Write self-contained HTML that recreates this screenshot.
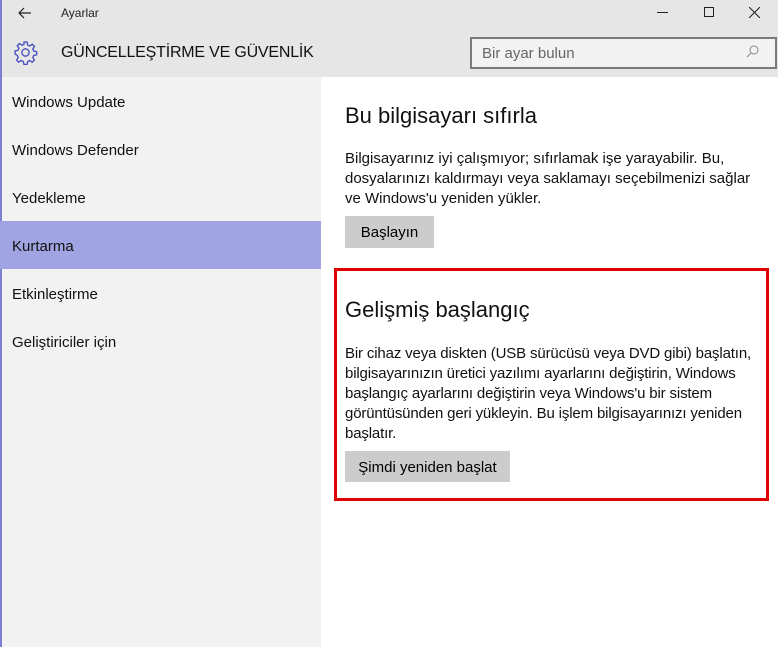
<!DOCTYPE html>
<html><head><meta charset="utf-8"><style>
*{margin:0;padding:0;box-sizing:border-box}
body{width:778px;height:647px;overflow:hidden;background:#fff;font-family:"Liberation Sans",sans-serif;color:#000;position:relative}
.hdr{position:absolute;left:0;top:0;width:778px;height:77px;background:#e6e6e6}
.side{position:absolute;left:0;top:77px;width:321px;height:570px;background:#f2f2f2}
.lb{position:absolute;left:0;top:0;width:2px;height:647px;background:#7b7fd0}
.t{position:absolute;white-space:nowrap}
.item{position:absolute;left:0;width:321px;height:48px;padding-left:12px;padding-top:2px;line-height:48px;font-size:15px;color:#111}
.sel{background:#a0a4e2}
.btn{position:absolute;background:#cccccc;font-size:15px;text-align:center;padding-top:1px}
p.b{position:absolute;left:345px;font-size:15px;line-height:20px;white-space:nowrap;color:#111}
</style></head><body>
<div class="hdr"></div>
<div class="side"></div>
<div class="lb"></div>
<svg class="t" style="left:17px;top:5px" width="16" height="16" viewBox="0 0 16 16"><path d="M14 8H2M7 3L2 8l5 5" fill="none" stroke="#222" stroke-width="1.2"/></svg>
<div class="t" style="left:61px;top:6px;font-size:12px;color:#222">Ayarlar</div>
<svg class="t" style="left:13px;top:40px" width="25" height="25" viewBox="0 0 24 24"><g fill="none" stroke="#4a4fc0" stroke-width="1.3"><circle cx="12" cy="12" r="3.5"/><path d="M10.5 2h3l.6 2.8 2 .9 2.4-1.6 2.1 2.1-1.6 2.4.9 2 2.8.6v3l-2.8.6-.9 2 1.6 2.4-2.1 2.1-2.4-1.6-2 .9-.6 2.8h-3l-.6-2.8-2-.9-2.4 1.6-2.1-2.1 1.6-2.4-.9-2L2 13.5v-3l2.8-.6.9-2-1.6-2.4 2.1-2.1 2.4 1.6 2-.9z"/></g></svg>
<div class="t" style="left:61px;top:44px;font-size:16px;color:#111;letter-spacing:-0.2px">GÜNCELLEŞTİRME VE GÜVENLİK</div>
<div class="t" style="left:657px;top:12px;width:11px;height:1px;background:#222"></div>
<div class="t" style="left:704px;top:7px;width:10px;height:10px;border:1px solid #222"></div>
<svg class="t" style="left:749px;top:7px" width="11" height="11"><path d="M0 0L11 11M11 0L0 11" stroke="#222" stroke-width="1.1"/></svg>
<div class="t" style="left:470px;top:37px;width:307px;height:32px;border:2px solid #7a7a7a;background:#f2f2f2"></div>
<div class="t" style="left:482px;top:45px;font-size:15px;color:#666">Bir ayar bulun</div>
<svg class="t" style="left:746px;top:45px" width="13" height="13" viewBox="0 0 13 13"><circle cx="8" cy="5" r="4" fill="none" stroke="#888"/><path d="M5 8L1 12" stroke="#888"/></svg>
<div class="item" style="top:77px">Windows Update</div>
<div class="item" style="top:125px">Windows Defender</div>
<div class="item" style="top:173px">Yedekleme</div>
<div class="item sel" style="top:221px">Kurtarma</div>
<div class="item" style="top:269px">Etkinleştirme</div>
<div class="item" style="top:317px">Geliştiriciler için</div>
<div class="t" style="left:345px;top:103px;font-size:22px;color:#111">Bu bilgisayarı sıfırla</div>
<p class="b" style="top:149px">Bilgisayarınız iyi çalışmıyor; sıfırlamak işe yarayabilir. Bu,<br>dosyalarınızı kaldırmayı veya saklamayı seçebilmenizi sağlar<br>ve Windows'u yeniden yükler.</p>
<div class="btn" style="left:345px;top:216px;width:89px;height:32px;line-height:32px">Başlayın</div>
<div class="t" style="left:334px;top:268px;width:435px;height:233px;border:3px solid #e00000"></div>
<div class="t" style="left:345px;top:297px;font-size:22px;color:#111">Gelişmiş başlangıç</div>
<p class="b" style="top:344px;letter-spacing:-0.15px">Bir cihaz veya diskten (USB sürücüsü veya DVD gibi) başlatın,<br>bilgisayarınızın üretici yazılımı ayarlarını değiştirin, Windows<br>başlangıç ayarlarını değiştirin veya Windows'u bir sistem<br>görüntüsünden geri yükleyin. Bu işlem bilgisayarınızı yeniden<br>başlatır.</p>
<div class="btn" style="left:345px;top:451px;width:165px;height:31px;line-height:31px">Şimdi yeniden başlat</div>
</body></html>
